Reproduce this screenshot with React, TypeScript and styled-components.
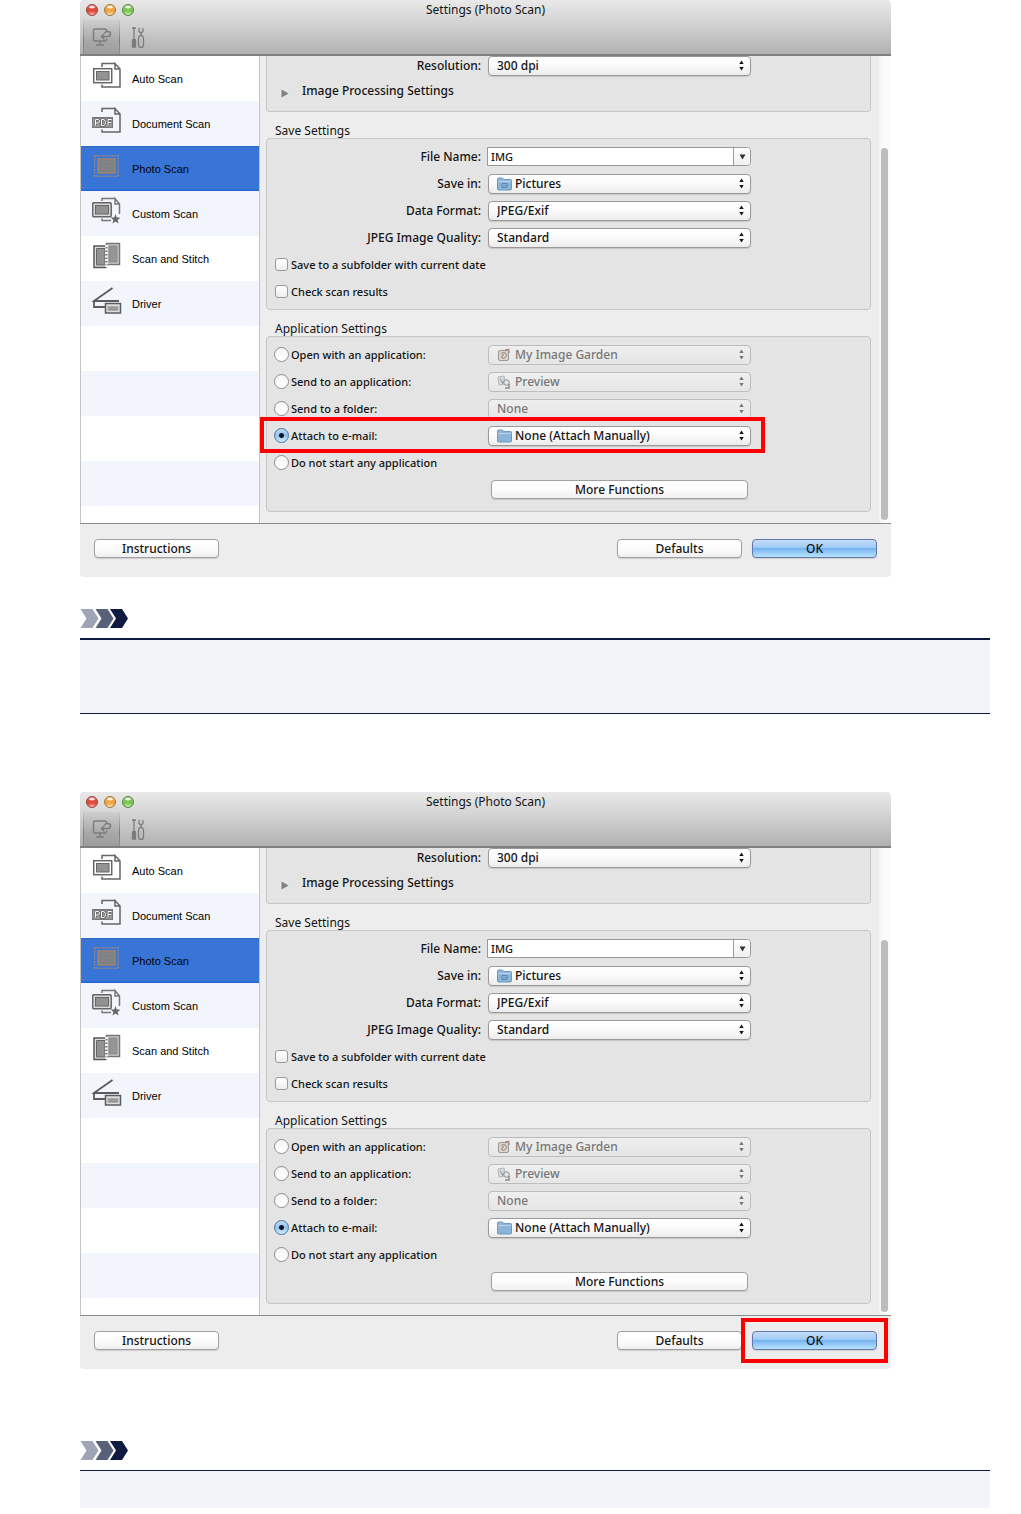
import React, { useId } from 'react';
import styled, { createGlobalStyle, css } from 'styled-components';

const Global = createGlobalStyle`
  *, *::before, *::after { box-sizing: border-box; }
  body { margin: 0; background: #fff; }
  button, input, select { font: inherit; color: inherit; margin: 0; }
`;

const uiFont = '"Noto Sans", "Open Sans", sans-serif';

const Page = styled.main`
  padding: 0 31px 6px 80px;
  font: 500 12px/16px ${uiFont};
  color: #141414;
`;

const Window = styled.section<{ $gap: number }>`
  display: flex;
  flex-direction: column;
  width: 100%;
  max-width: 811px;
  margin-bottom: ${(p) => p.$gap}px;
  border-radius: 4px;
  background: #ededed;
`;

const Header = styled.header`
  height: 56px;
  border-radius: 4px 4px 0 0;
  border-bottom: 2px solid #808080;
  background: linear-gradient(#e9e9e9, #d2d2d2 45%, #b0b0b0);
`;

const TitleBar = styled.div`
  display: grid;
  grid-template-columns: 60px 1fr 60px;
  align-items: center;
  height: 20px;
`;

const Lights = styled.div`
  display: flex;
  gap: 6px;
  padding-left: 6px;
`;

const Light = styled.button<{ $color: string; $edge: string }>`
  width: 12px;
  height: 12px;
  padding: 0;
  border: 1px solid ${(p) => p.$edge};
  border-radius: 50%;
  background:
    radial-gradient(ellipse 4px 2px at 50% 20%, #ffffffe0 40%, transparent),
    radial-gradient(ellipse 6px 4px at 50% 100%, #ffffffb0, transparent),
    ${(p) => p.$color};
`;

const Title = styled.h1`
  margin: 0;
  font: 400 12px/20px ${uiFont};
  text-align: center;
`;

const Toolbar = styled.nav`
  display: flex;
  padding-left: 3px;
  height: 34px;
`;

const Tool = styled.button<{ $active?: boolean }>`
  display: grid;
  place-items: center;
  width: 37px;
  padding: 0;
  border: 0;
  background: none;
  ${(p) =>
    p.$active &&
    css`
      background:
        linear-gradient(#c8c8c8, #7c7c7c 60%, #8c8c8c) left / 1px 100% no-repeat,
        linear-gradient(#c8c8c8, #7c7c7c 60%, #8c8c8c) right / 1px 100% no-repeat,
        linear-gradient(#cfcfcf, #a9a9a9 60%, #9c9c9c);
    `}
`;

const Body = styled.div`
  display: flex;
  border-bottom: 1px solid #8c8c8c;
`;

const Sidebar = styled.nav`
  flex: 0 0 180px;
  height: 467px;
  overflow: hidden;
  border: solid #c4c4c4;
  border-width: 0 1px;
  background: repeating-linear-gradient(#fff 0 45px, #f2f5fb 45px 90px);
`;

const SideItem = styled.button<{ $selected?: boolean }>`
  display: flex;
  align-items: center;
  gap: 9px;
  width: 100%;
  height: 45px;
  padding: 0 11px;
  border: 0;
  background: ${(p) => (p.$selected ? 'linear-gradient(#2a66c4, #3875d7 2px 43px, #1f5fd0)' : 'none')};
  font: 400 11px/16px "Liberation Sans", Arial, sans-serif;
  color: #000;
  text-align: left;

  svg { flex: none; margin-bottom: 6px; }
`;

const Content = styled.div`
  flex: 1;
  min-width: 0;
  padding: 0 8px 11px 6px;
`;

const ScrollTrack = styled.div`
  flex: 0 0 12px;
  padding: 92px 3px 3px 2px;
  background: linear-gradient(90deg, #f2f2f2, #fbfbfb 4px);
`;

const ScrollThumb = styled.div`
  height: 100%;
  border-radius: 4px;
  background: #bcbcbc;
`;

const Panel = styled.div<{ $clipped?: boolean; $end?: number }>`
  padding: 4px 0 ${(p) => p.$end ?? 4}px;
  border: 1px solid #c6c6c6;
  border-radius: 4px;
  background: #e4e4e4;
  ${(p) =>
    p.$clipped &&
    css`
      padding: 0;
      border-top: 0;
      border-radius: 0 0 4px 4px;
    `}
`;

const PanelTitle = styled.h2`
  margin: 0;
  padding: 12px 9px 0;
  font: 400 12px/14px ${uiFont};
`;

const Row = styled.div<{ $short?: boolean }>`
  position: relative;
  display: grid;
  grid-template-columns: 214px minmax(0, 263px);
  column-gap: 7px;
  align-items: center;
  height: ${(p) => (p.$short ? 20 : 27)}px;
`;

const FieldLabel = styled.label`
  text-align: right;
  white-space: nowrap;
`;

const ChoiceLabel = styled.label`
  display: flex;
  align-items: center;
  gap: 3px;
  padding-left: 7px;
  font-size: 11px;
  white-space: nowrap;
`;

const Checkbox = styled.input.attrs({ type: 'checkbox' })`
  appearance: none;
  flex: none;
  width: 13px;
  height: 13px;
  margin: 0 0 0 1px;
  border: 1px solid #9a9a9a;
  border-radius: 3px;
  background: linear-gradient(#fff, #eee);
`;

const Radio = styled.input.attrs({ type: 'radio' })`
  appearance: none;
  flex: none;
  width: 15px;
  height: 15px;
  margin: 0 -1px 0 0;
  border: 1px solid #8e8e8e;
  border-radius: 50%;
  background: linear-gradient(#f4f4f4, #fff);

  &:checked {
    border-color: #4b6f9c;
    background: radial-gradient(circle, #10141c 0 2px, transparent 3px), linear-gradient(#c3dcf5, #8fc1f0 50%, #d5f2ff);
  }
`;

const Disclosure = styled.button`
  display: flex;
  align-items: center;
  gap: 13px;
  height: 35px;
  padding: 0 14px 5px;
  border: 0;
  background: none;

  svg { margin-top: 5px; }
`;

const SelectBox = styled.div<{ $disabled?: boolean }>`
  position: relative;
  display: flex;
  height: 20px;
  border: 1px solid ${(p) => (p.$disabled ? '#bdbdbd' : '#999')};
  border-radius: 4px;
  background: ${(p) => (p.$disabled ? 'linear-gradient(#efefef, #e6e6e6)' : 'linear-gradient(#fff, #fbfbfb 45%, #ececec)')};
  box-shadow: ${(p) => (p.$disabled ? 'none' : '0 1px 1px #0002')};
  color: ${(p) => (p.$disabled ? '#777' : '#141414')};
`;

const SelectControl = styled.select<{ $icon?: boolean }>`
  appearance: none;
  width: 100%;
  padding: 0 20px 0 ${(p) => (p.$icon ? 26 : 8)}px;
  border: 0;
  background: none;
  line-height: 16px;
  opacity: 1;

  &:disabled { color: inherit; opacity: 1; }
`;

const SelectIcon = styled.span`
  position: absolute;
  left: 8px;
  top: 2px;
  display: flex;
  pointer-events: none;
`;

const SelectArrows = styled.span`
  position: absolute;
  right: 5px;
  top: 3px;
  display: flex;
  pointer-events: none;
`;

const Combo = styled.div`
  display: flex;
  height: 19px;
  margin-left: -1px;
  border: 1px solid #999;
  border-radius: 0 4px 4px 0;
  background: #fff;
`;

const ComboInput = styled.input`
  flex: 1;
  min-width: 0;
  padding: 1px 3px 0;
  border: 0;
  background: none;
  font-size: 11px;
  line-height: 16px;
`;

const ComboButton = styled.button`
  display: grid;
  place-items: center;
  width: 17px;
  padding: 0;
  border: 0;
  border-left: 1px solid #999;
  border-radius: 0 3px 3px 0;
  background: linear-gradient(#fff, #f0f0f0);
`;

const PushButton = styled.button<{ $primary?: boolean; $wide?: boolean }>`
  width: ${(p) => (p.$wide ? 257 : 125)}px;
  height: 19px;
  padding: 0;
  border: 1px solid ${(p) => (p.$primary ? '#6478ae' : '#a0a0a0')};
  border-radius: 4px;
  background: ${(p) =>
    p.$primary
      ? 'linear-gradient(#c4dcf6, #9fcaf4 45%, #74b3f0 50%, #b9e4fd)'
      : 'linear-gradient(#fff, #fcfcfc 50%, #f0f0f0)'};
  box-shadow: 0 1px 1px #0002;
  line-height: 16px;
`;

const MoreCell = styled.div`
  grid-column: 2;
  display: flex;
  justify-content: center;
`;

const Footer = styled.footer`
  display: flex;
  align-items: flex-start;
  gap: 10px;
  height: 53px;
  padding: 15px 14px 0;
`;

const Spacer = styled.div`
  flex: 1;
`;

const RowMark = styled.div`
  position: absolute;
  inset: -5px auto -4px -7px;
  width: 505px;
  border: 4px solid #f00;
  pointer-events: none;
`;

const OkSlot = styled.div`
  position: relative;
  display: flex;
`;

const OkMark = styled.div`
  position: absolute;
  inset: -13px -11px;
  border: 4px solid #f00;
  pointer-events: none;
`;

const Note = styled.aside<{ $gap: number }>`
  margin-bottom: ${(p) => p.$gap}px;

  > svg { display: block; margin-bottom: 10px; }
`;

const NoteBody = styled.div<{ $open?: boolean }>`
  height: ${(p) => (p.$open ? 38 : 76)}px;
  border: solid #0f1a42;
  border-width: ${(p) => (p.$open ? '1px 0 0' : '2px 0 1px')};
  background: #f3f4fa;
`;

const Chevrons = () => (
  <svg width="48" height="19" viewBox="0 0 48 19" aria-hidden="true">
    <path d="M0.500 0H12.500L18.500 9.500L12.500 19H0.500L6.500 9.500z" fill="#9fa5b4" />
    <path d="M15.500 0H27.500L33.500 9.500L27.500 19H15.500L21.500 9.500z" fill="#596079" />
    <path d="M30 0H42L48 9.500L42 19H30L36 9.500z" fill="#101a40" />
  </svg>
);

const Arrows = () => (
  <svg width="7" height="11" viewBox="0 0 7 11" fill="currentColor" aria-hidden="true">
    <path d="M3.500 0.500L5.700 4H1.300zM3.500 10.500L5.700 7H1.300z" />
  </svg>
);

const ScreenIcon = () => (
  <svg width="20" height="20" viewBox="0 0 20 20" fill="none" stroke="#7c7c7c" strokeWidth="1.500" aria-hidden="true">
    <path d="M14.500 4V3.500Q14.500 2 13 2H3Q1.500 2 1.500 3.500V12.500Q1.500 14 3 14H13Q14.500 14 14.500 12.500V11.500M8 14v3M4 18h8" />
    <path d="M9.500 9.500h5q4 0 4-2.500t-3-2.500q-2.500 0-3 2M12 7L9.500 9.500l2.500 2.500" />
  </svg>
);

const ToolsIcon = () => (
  <svg width="16" height="21" viewBox="0 0 16 21" fill="none" stroke="#7c7c7c" strokeWidth="1.300" aria-hidden="true">
    <path d="M1 1h4M3 1v10" />
    <path d="M1.500 20v-6q0-2 1.500-2t1.500 2v6z" fill="#7c7c7c" />
    <path d="M8.500 1q-1.500 3 .5 4.500h2q2-1.500.5-4.500M10 5.500v3M9 8.500q-1.500 1-1.500 3v6q0 3 2.500 3t2.500-3v-6q0-2-1.500-3z" />
  </svg>
);

const PageOutline = () => (
  <path d="M10 5V1.500H22.500M10 22.500V25H28V7L23 1.500V7H28" fill="none" stroke="#666" strokeWidth="1.500" />
);

const AutoIcon = () => (
  <svg width="31" height="27" viewBox="0 0 31 27" aria-hidden="true">
    <PageOutline />
    <rect x="1.700" y="6.700" width="18" height="14" fill="#fff" stroke="#666" strokeWidth="1.500" />
    <rect x="4.500" y="9.500" width="12.500" height="8.500" fill="#929292" stroke="#666" />
  </svg>
);

const DocumentIcon = () => (
  <svg width="31" height="27" viewBox="0 0 31 27" aria-hidden="true">
    <PageOutline />
    <rect x="0.500" y="10.500" width="20" height="10" fill="#999" stroke="#777" />
    <path d="M3.500 18.500v-6H6q1.500 0 1.500 1.800T6 16H4M9.500 12.500v6H11q2.500 0 2.500-3t-2.500-3zM16 18.500v-6h3.500M16 15.500h3" fill="none" stroke="#666" strokeWidth="2.400" />
    <path d="M3.500 18.500v-6H6q1.500 0 1.500 1.800T6 16H4M9.500 12.500v6H11q2.500 0 2.500-3t-2.500-3zM16 18.500v-6h3.500M16 15.500h3" fill="none" stroke="#fff" strokeWidth="1" />
  </svg>
);

const PhotoIcon = () => (
  <svg width="31" height="27" viewBox="0 0 31 27" aria-hidden="true">
    <rect x="2.700" y="3.700" width="23.500" height="20.500" fill="none" stroke="#8b8588" strokeWidth="1.500" strokeDasharray="2 0.800" />
    <rect x="6" y="7" width="17" height="14" fill="#7f8084" stroke="#a08468" strokeWidth="1.500" />
    <path d="M7 10.500h15M7 14h15M7 17.500h15" stroke="#97866f" strokeWidth="1" strokeDasharray="1 1" />
  </svg>
);

const CustomIcon = () => (
  <svg width="31" height="27" viewBox="0 0 31 27" aria-hidden="true">
    <path d="M10 4V1.500H22.500M10 21.500V23.500H19M27.500 17V7L23 1.500V7H27.500" fill="none" stroke="#777" strokeWidth="1.500" />
    <rect x="0.700" y="5.700" width="18.500" height="14" rx="1" fill="#d8d8d8" stroke="#666" strokeWidth="1.500" />
    <rect x="3.500" y="8.500" width="13" height="8.500" fill="#929292" stroke="#666" />
    <path d="M23.500 17l1.300 3.500 3.700.1-2.900 2.300 1 3.600-3.100-2.100-3.100 2.100 1-3.600-2.900-2.300 3.700-.1z" fill="#666" />
  </svg>
);

const StitchIcon = () => (
  <svg width="31" height="27" viewBox="0 0 31 27" aria-hidden="true">
    <path d="M14.500 4H2V25.500H14.500" fill="#ddd" stroke="#555" strokeWidth="1.500" />
    <path d="M13 6.500H4.500V23H13z" fill="#929292" stroke="#666" />
    <path d="M14.500 1.500H27.500V22.500H14.500z" fill="#ccc" stroke="#777" strokeWidth="1.500" />
    <path d="M17 4H25V20H17z" fill="#959595" stroke="#888" />
    <path d="M14.500 3v22" stroke="#fff" strokeWidth="2.500" strokeDasharray="2 1.500" />
  </svg>
);

const DriverIcon = () => (
  <svg width="31" height="27" viewBox="0 0 31 27" fill="none" stroke="#5c5c5c" strokeWidth="1.800" aria-hidden="true">
    <path d="M20.500 1L2 14H27M2 14V20H13" />
    <rect x="13.500" y="16.500" width="15" height="9.500" fill="#ddd" strokeWidth="1.500" />
    <path d="M16 19.500h10v4H16z" fill="#999" stroke="#aaa" strokeWidth="1" />
  </svg>
);

const FolderIcon = ({ picture }: { picture?: boolean }) => (
  <svg width="15" height="14" viewBox="0 0 15 14" aria-hidden="true">
    <path d="M0.500 12V2Q0.500 1 1.500 1H5.500L7 2.500H13.500Q14.500 2.500 14.500 3.500V12Q14.500 13 13.500 13H1.500Q0.500 13 0.500 12z" fill="#8ab5d8" stroke="#7199bb" />
    <path d="M1 4.500H14" stroke="#b9d6ec" />
    {picture && <path d="M5 6.500h5v4H5zM6 9.500l1.500-1.500 1 1 1-1" fill="none" stroke="#5a89b3" />}
  </svg>
);

const GardenIcon = () => (
  <svg width="14" height="14" viewBox="0 0 14 14" fill="none" aria-hidden="true">
    <rect x="1.500" y="2.500" width="10" height="10" rx="1.500" fill="#d8d4d2" stroke="#999" />
    <path d="M4 5.500q3-2 5 0t-1 4-3-.5 2-2.500M8 2l4-1v4" stroke="#a0806f" />
  </svg>
);

const PreviewIcon = () => (
  <svg width="14" height="14" viewBox="0 0 14 14" fill="none" aria-hidden="true">
    <path d="M1 2l6-1 1 8-6 1z" fill="#d5dbe0" stroke="#b5b5b5" />
    <path d="M3 3.500l2.500 5 1-3" stroke="#8b99a5" />
    <circle cx="9.500" cy="7.500" r="2.800" fill="#dde3e8" stroke="#8c8c8c" />
    <path d="M12 9v4H8" stroke="#8c8c8c" strokeWidth="1.500" />
  </svg>
);

const sideItems = [
  { name: 'Auto Scan', Icon: AutoIcon },
  { name: 'Document Scan', Icon: DocumentIcon },
  { name: 'Photo Scan', Icon: PhotoIcon },
  { name: 'Custom Scan', Icon: CustomIcon },
  { name: 'Scan and Stitch', Icon: StitchIcon },
  { name: 'Driver', Icon: DriverIcon },
];

type PopupProps = { id?: string; label?: string; value: string; icon?: React.ReactNode; disabled?: boolean };

const Popup = ({ id, label, value, icon, disabled }: PopupProps) => (
  <SelectBox $disabled={disabled}>
    {icon && <SelectIcon>{icon}</SelectIcon>}
    <SelectControl id={id} aria-label={label} $icon={!!icon} disabled={disabled}>
      <option>{value}</option>
    </SelectControl>
    <SelectArrows><Arrows /></SelectArrows>
  </SelectBox>
);

const Field = ({ label, short, ...popup }: PopupProps & { label: string; short?: boolean }) => {
  const id = useId();
  return (
    <Row $short={short}>
      <FieldLabel htmlFor={id}>{label}</FieldLabel>
      <Popup id={id} {...popup} />
    </Row>
  );
};

const applications = [
  { label: 'Open with an application:', value: 'My Image Garden', icon: <GardenIcon /> },
  { label: 'Send to an application:', value: 'Preview', icon: <PreviewIcon /> },
  { label: 'Send to a folder:', value: 'None' },
  { label: 'Attach to e-mail:', value: 'None (Attach Manually)', icon: <FolderIcon />, active: true },
  { label: 'Do not start any application' },
];

const SettingsWindow = ({ mark, gap }: { mark: 'email' | 'ok'; gap: number }) => {
  const id = useId();
  return (
    <Window $gap={gap}>
      <Header>
        <TitleBar>
          <Lights>
            <Light aria-label="Close" $color="#e2463c" $edge="#9a4a44" />
            <Light aria-label="Minimize" $color="#f0a540" $edge="#a07a45" />
            <Light aria-label="Zoom" $color="#7cc653" $edge="#5d8a49" />
          </Lights>
          <Title>Settings (Photo Scan)</Title>
        </TitleBar>
        <Toolbar>
          <Tool $active aria-label="Scanning from a computer"><ScreenIcon /></Tool>
          <Tool aria-label="General settings"><ToolsIcon /></Tool>
        </Toolbar>
      </Header>
      <Body>
        <Sidebar>
          {sideItems.map(({ name, Icon }) => (
            <SideItem key={name} $selected={name === 'Photo Scan'}>
              <Icon />
              {name}
            </SideItem>
          ))}
        </Sidebar>
        <Content>
          <Panel $clipped>
            <Field short label="Resolution:" value="300 dpi" />
            <Disclosure>
              <svg width="8" height="9" viewBox="0 0 8 9" fill="#808080" aria-hidden="true"><path d="M0.500 0.500L7.500 4.500L0.500 8.500z" /></svg>
              Image Processing Settings
            </Disclosure>
          </Panel>
          <PanelTitle>Save Settings</PanelTitle>
          <Panel>
            <Row>
              <FieldLabel htmlFor={id + 'file'}>File Name:</FieldLabel>
              <Combo>
                <ComboInput id={id + 'file'} defaultValue="IMG" />
                <ComboButton aria-label="Recent file names">
                  <svg width="7" height="6" viewBox="0 0 7 6" aria-hidden="true"><path d="M0.500 0.500h6L3.500 5.500z" fill="#333" /></svg>
                </ComboButton>
              </Combo>
            </Row>
            <Field label="Save in:" value="Pictures" icon={<FolderIcon picture />} />
            <Field label="Data Format:" value="JPEG/Exif" />
            <Field label="JPEG Image Quality:" value="Standard" />
            <Row><ChoiceLabel><Checkbox />Save to a subfolder with current date</ChoiceLabel></Row>
            <Row><ChoiceLabel><Checkbox />Check scan results</ChoiceLabel></Row>
          </Panel>
          <PanelTitle>Application Settings</PanelTitle>
          <Panel $end={8}>
            {applications.map(({ label, value, icon, active }) => (
              <Row key={label}>
                <ChoiceLabel><Radio name={id + 'app'} defaultChecked={active} />{label}</ChoiceLabel>
                {value && <Popup label={label} value={value} icon={icon} disabled={!active} />}
                {active && mark === 'email' && <RowMark />}
              </Row>
            ))}
            <Row><MoreCell><PushButton $wide>More Functions</PushButton></MoreCell></Row>
          </Panel>
        </Content>
        <ScrollTrack><ScrollThumb /></ScrollTrack>
      </Body>
      <Footer>
        <PushButton>Instructions</PushButton>
        <Spacer />
        <PushButton>Defaults</PushButton>
        <OkSlot>
          <PushButton $primary>OK</PushButton>
          {mark === 'ok' && <OkMark />}
        </OkSlot>
      </Footer>
    </Window>
  );
};

export default function App() {
  return (
    <>
      <Global />
      <Page>
        <SettingsWindow mark="email" gap={32} />
        <Note $gap={78}><Chevrons /><NoteBody /></Note>
        <SettingsWindow mark="ok" gap={72} />
        <Note $gap={0}><Chevrons /><NoteBody $open /></Note>
      </Page>
    </>
  );
}
